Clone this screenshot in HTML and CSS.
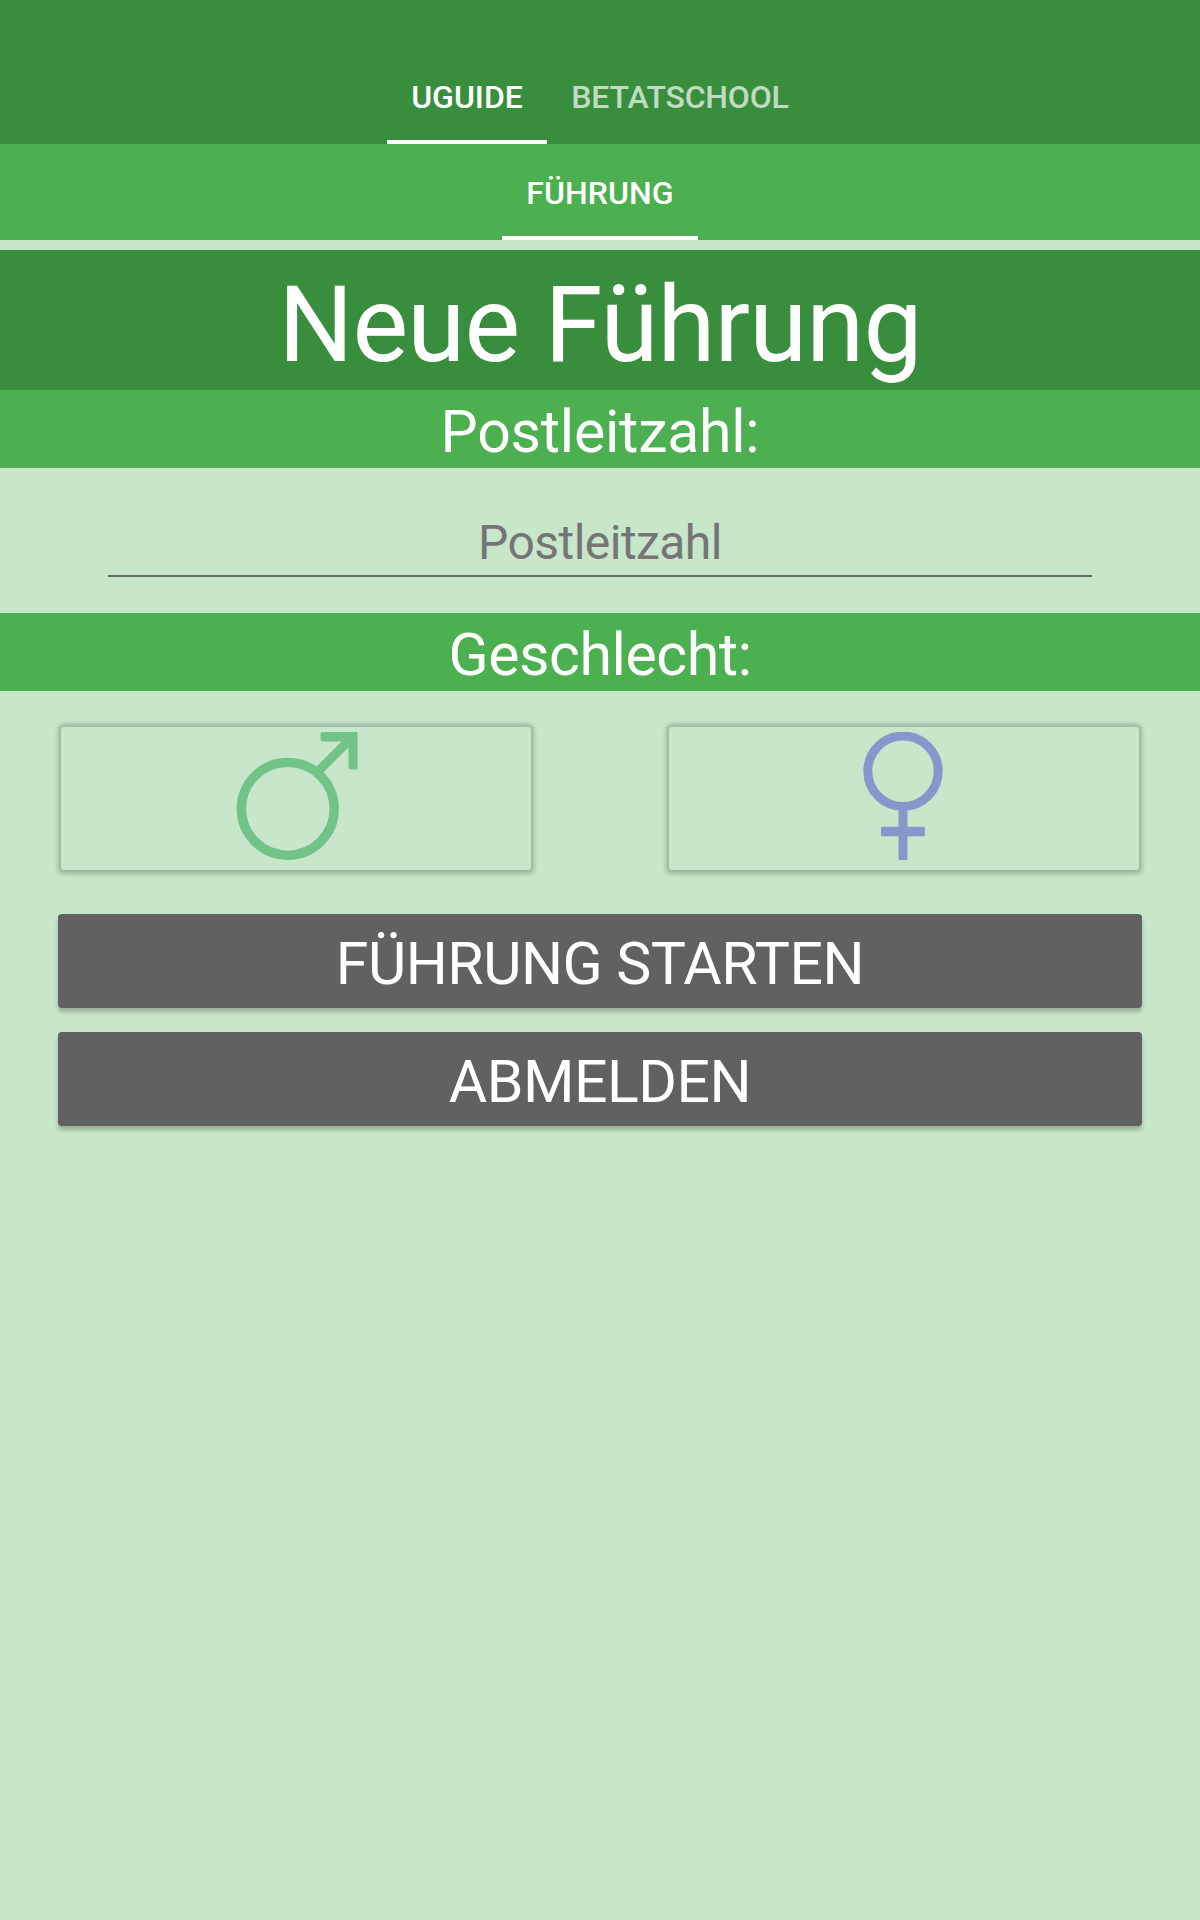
FILE: index.html
```html
<!DOCTYPE html>
<html lang="de">
<head>
<meta charset="utf-8">
<title>UGuide</title>
<link rel="stylesheet" href="styles.css">
</head>
<body>
<nav class="tabs tabs-main">
  <a class="tab tab-guide active">UGUIDE</a>
  <a class="tab tab-school">BETATSCHOOL</a>
</nav>
<nav class="tabs tabs-sub">
  <a class="tab tab-tour active">FÜHRUNG</a>
</nav>
<main class="form">
  <h1 class="title">Neue Führung</h1>
  <h2 class="band">Postleitzahl:</h2>
  <div class="field-area">
    <input class="field" type="text" placeholder="Postleitzahl">
  </div>
  <h2 class="band band-gender">Geschlecht:</h2>
  <div class="choices">
    <button class="choice male" type="button" aria-label="Männlich">
      <svg width="128" height="128" viewBox="0 0 128 128" fill="none" stroke="currentColor">
        <circle cx="55.8" cy="76.8" r="46.4" stroke-width="9.4"/>
        <path d="M84 41.5 L119 6.5" stroke-width="9"/>
        <path d="M90.5 0 H125.5 V35.5 Q125.5 37.5 123.5 37.5 H118.5 Q116.5 37.5 116.5 35.5 V9.5 H90.5 Q88.5 9.5 88.5 7.5 V2 Q88.5 0 90.5 0 Z" fill="currentColor" stroke="none"/>
      </svg>
    </button>
    <button class="choice female" type="button" aria-label="Weiblich">
      <svg width="128" height="128" viewBox="0 0 128 128" fill="none" stroke="currentColor">
        <circle cx="63" cy="39.3" r="35.2" stroke-width="9"/>
        <rect x="58.5" y="76" width="9" height="52" rx="1.5" fill="currentColor" stroke="none"/>
        <rect x="41" y="94.8" width="44" height="9.4" rx="1.5" fill="currentColor" stroke="none"/>
      </svg>
    </button>
  </div>
  <div class="actions">
    <button class="action" type="button">FÜHRUNG STARTEN</button>
    <button class="action" type="button">ABMELDEN</button>
  </div>
</main>
</body>
</html>
```
FILE: styles.css
```css
* { box-sizing: border-box; }

body {
  margin: 0;
  min-height: 1920px;
  background: #c8e6c9;
  font-family: Roboto, sans-serif;
  color: #fff;
}

.tabs {
  display: flex;
  justify-content: center;
}
.tabs-main { padding-top: 48px; background: #388e3c; }
.tabs-sub { background: #4caf50; }

.tab {
  height: 96px;
  padding-top: 2px;
  border-bottom: 4px solid transparent;
  font-size: 32px;
  font-weight: 500;
  line-height: 94px;
  text-align: center;
  white-space: nowrap;
  color: rgba(255, 255, 255, .7);
}
.tab.active { color: #fff; border-bottom-color: #fff; }
.tab-guide { width: 160px; }
.tab-school { width: 266px; letter-spacing: -.2px; }
.tab-tour { width: 196px; letter-spacing: .1px; }

.form { padding-top: 10px; }

.title, .band {
  margin: 0;
  font-weight: 400;
  text-align: center;
}
.title {
  height: 140px;
  padding-top: 11px;
  background: #388e3c;
  font-size: 105px;
  line-height: 130px;
  letter-spacing: -.85px;
}
.band {
  height: 78px;
  padding-top: 5px;
  background: #4caf50;
  font-size: 59px;
  line-height: 73px;
  letter-spacing: -.25px;
}
.band-gender { letter-spacing: -.43px; }

.field-area {
  height: 145px;
  padding: 37px 108px 0;
}
.field {
  display: block;
  width: 100%;
  height: 72px;
  padding: 4px 0 0;
  border: 0;
  border-bottom: 2px solid #5f6e5f;
  outline: 0;
  background: none;
  font: 48px Roboto, sans-serif;
  letter-spacing: -.55px;
  text-align: center;
}
.field::placeholder { color: #757575; opacity: 1; }

.choices {
  display: flex;
  justify-content: space-between;
  padding: 36px 61px 44px;
}
.choice {
  display: flex;
  justify-content: center;
  width: 470px;
  height: 143px;
  padding: 5px 0 0;
  border: 0;
  border-radius: 3px;
  background: #c8e6c9;
  box-shadow: 0 .5px 4px 3px rgba(0, 0, 0, .22);
}
.male { color: #72c387; }
.female { color: #8797cc; }

.actions {
  display: grid;
  gap: 24px;
  padding: 0 58px;
}
.action {
  height: 94px;
  padding: 5px 0 0;
  border: 0;
  border-radius: 4px;
  background: #616161;
  box-shadow: 0 4px 4px 0 rgba(0, 0, 0, .24);
  color: #fff;
  font: 59px/89px Roboto, sans-serif;
  letter-spacing: -.5px;
}
```
